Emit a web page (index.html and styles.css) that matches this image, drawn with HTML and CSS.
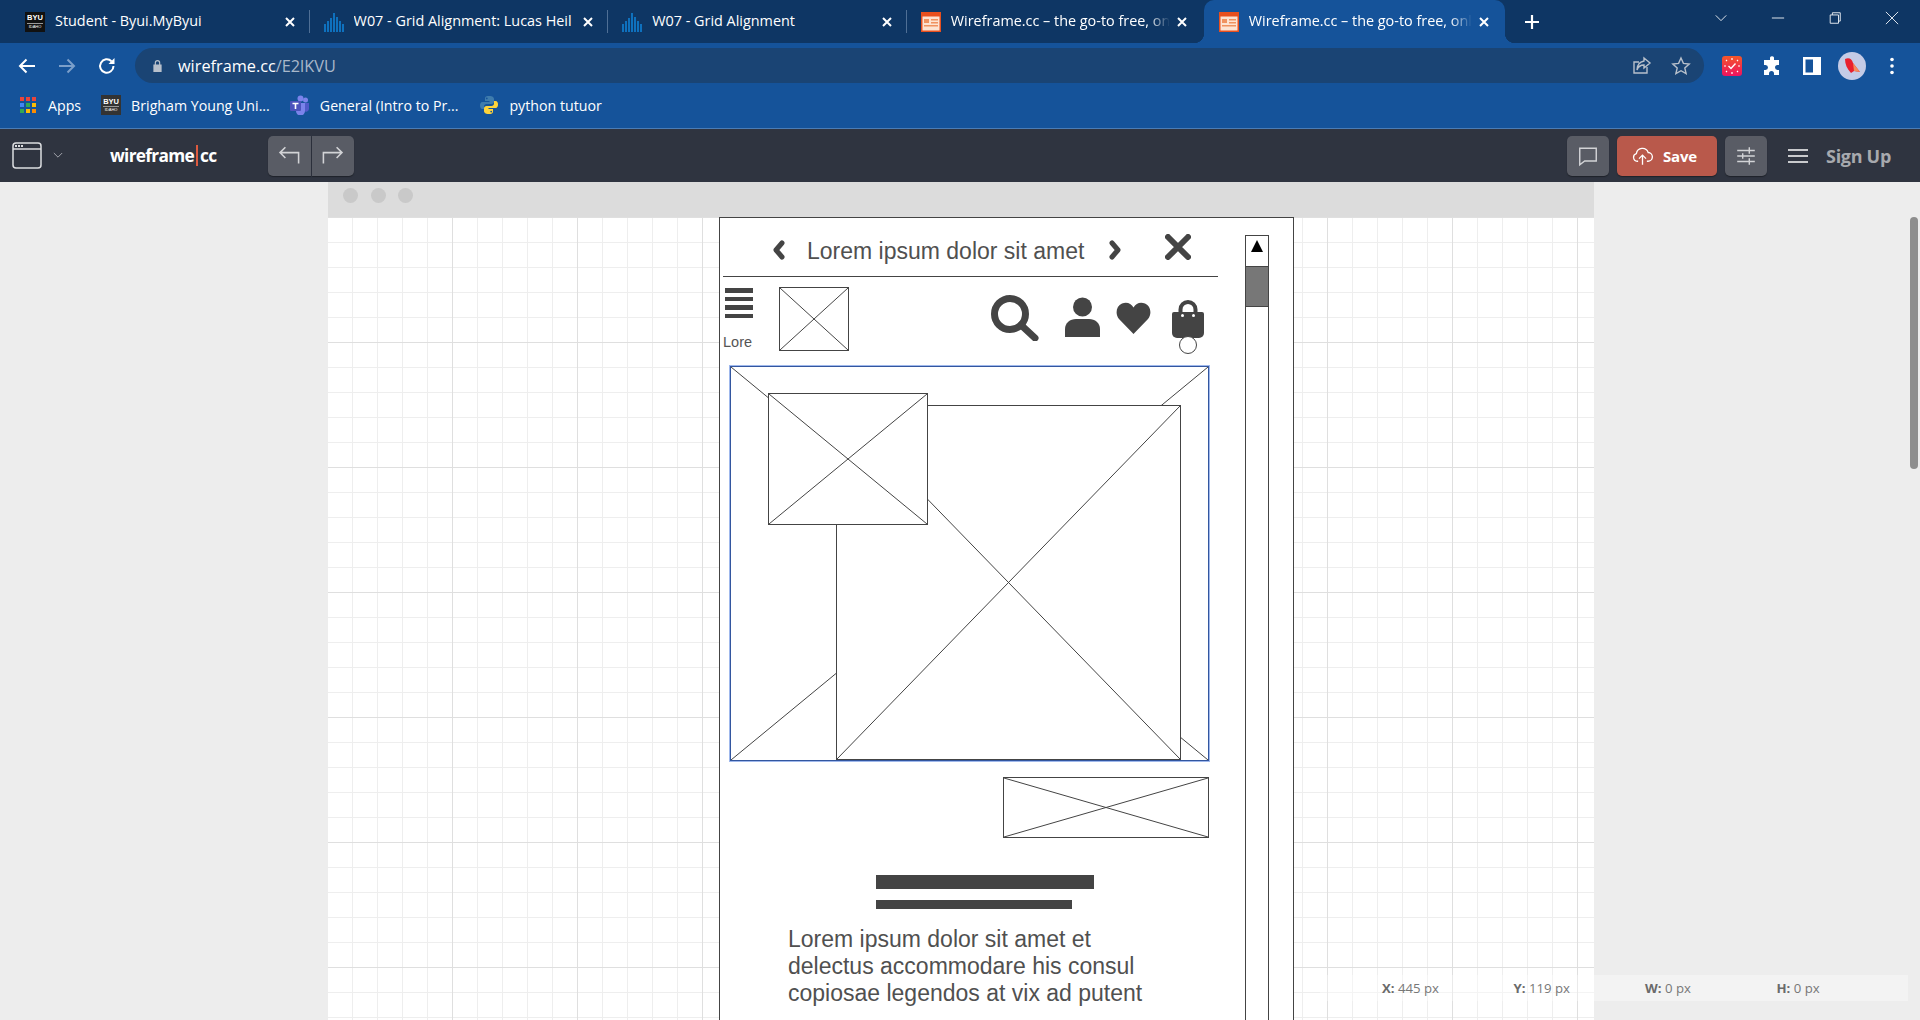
FILE: index.html
```html
<!DOCTYPE html>
<html lang="en">
<head>
  <meta charset="UTF-8">
  <title>Wireframe.cc</title>
  <link rel="stylesheet" href="styles.css">
</head>
<body>

<!-- TABS -->
<div class="tabstrip">
  <div class="tab">
    <span class="fav fav-byu"><b>BYU</b><i>IDAHO</i></span>
    <span class="tab-title">Student - Byui.MyByui</span>
    <svg class="tab-x" viewBox="0 0 12 12"><path d="M2 2l8 8M10 2l-8 8"/></svg>
  </div>
  <div class="tab">
    <svg class="fav" viewBox="0 0 20 20"><path class="bars" d="M1 12v8M4 9v11M7 6v14M10 1v19M13 5v15M16 9v11M19 12v8"/></svg>
    <span class="tab-title">W07 - Grid Alignment: Lucas Heil</span>
    <svg class="tab-x" viewBox="0 0 12 12"><path d="M2 2l8 8M10 2l-8 8"/></svg>
  </div>
  <div class="tab">
    <svg class="fav" viewBox="0 0 20 20"><path class="bars" d="M1 12v8M4 9v11M7 6v14M10 1v19M13 5v15M16 9v11M19 12v8"/></svg>
    <span class="tab-title">W07 - Grid Alignment</span>
    <svg class="tab-x" viewBox="0 0 12 12"><path d="M2 2l8 8M10 2l-8 8"/></svg>
  </div>
  <div class="tab tab-last">
    <svg class="fav" viewBox="0 0 20 20"><rect width="20" height="20" fill="#e8501e"/><rect x="1.5" y="4.5" width="17" height="14" fill="#fde3d2"/><path d="M3 7h5v4H3zM10 7h7v1.500h-7zM10 10h7v1.500h-7zM3 13h14v1.500H3z" fill="#f0925f"/></svg>
    <span class="tab-title tab-fade">Wireframe.cc – the go-to free, online</span>
    <svg class="tab-x" viewBox="0 0 12 12"><path d="M2 2l8 8M10 2l-8 8"/></svg>
  </div>
  <div class="tab tab-active">
    <svg class="fav" viewBox="0 0 20 20"><rect width="20" height="20" fill="#e8501e"/><rect x="1.500" y="4.500" width="17" height="14" fill="#fde3d2"/><path d="M3 7h5v4H3zM10 7h7v1.500h-7zM10 10h7v1.500h-7zM3 13h14v1.500H3z" fill="#f0925f"/></svg>
    <span class="tab-title tab-fade">Wireframe.cc – the go-to free, online</span>
    <svg class="tab-x" viewBox="0 0 12 12"><path d="M2 2l8 8M10 2l-8 8"/></svg>
  </div>
  <svg class="new-tab" viewBox="0 0 16 16"><path d="M8 1v14M1 8h14"/></svg>
  <div class="win-btns">
    <svg viewBox="0 0 16 16"><path d="M2 5l6 6 6-6"/></svg>
    <svg viewBox="0 0 16 16"><path d="M1 8h14"/></svg>
    <svg viewBox="0 0 16 16"><path d="M2.500 4.500h9.500v9.500H2.500zM5 4.500V2h9v9.500h-2"/></svg>
    <svg viewBox="0 0 16 16"><path d="M1 1l14 14M15 1L1 15"/></svg>
  </div>
</div>

<!-- ADDRESS BAR -->
<div class="toolbar">
  <svg class="nav-ico" viewBox="0 0 20 20"><path d="M18 10H3M9.500 3.500L3 10l6.500 6.500"/></svg>
  <svg class="nav-ico nav-off" viewBox="0 0 20 20"><path d="M2 10h15M10.500 3.500L17 10l-6.500 6.500"/></svg>
  <svg class="nav-ico" viewBox="0 0 20 20"><path d="M16.500 10a6.700 6.700 0 1 1-2-4.800"/><path class="solid" d="M17.500 2v6h-6z"/></svg>
  <div class="omnibox">
    <svg class="lock" viewBox="0 0 12 14"><path d="M3 6V4a3 3 0 0 1 6 0v2h1.500v8h-9V6zm1.300 0h3.400V4a1.700 1.700 0 0 0-3.400 0z"/></svg>
    <span class="url">wireframe.cc<span class="url-path">/E2lKVU</span></span>
    <svg class="omni-ico" viewBox="0 0 20 20"><path d="M15 11v6H2V6h5M12 2l6 5-6 5V9c-4 0-6 2-7 5 0-5 2-8 7-9z"/></svg>
    <svg class="omni-ico" viewBox="0 0 20 20"><path d="M10 2l2.400 5.400 5.800.6-4.400 3.900 1.300 5.800-5.100-3-5.100 3 1.300-5.800L1.800 8l5.800-.6z"/></svg>
  </div>
  <div class="ext-row">
    <svg class="ext" viewBox="0 0 20 20"><defs><linearGradient id="extg" x1="0" y1="0" x2="0" y2="1"><stop offset="0" stop-color="#f4572a"/><stop offset="1" stop-color="#ee1260"/></linearGradient></defs><rect width="20" height="20" rx="3" fill="url(#extg)"/><path d="M6.500 10l2.500 2.500 4.500-5" fill="none" stroke="#fff" stroke-width="1.400"/><path d="M10 2v2M10 16v2M2 10h2M16 10h2M4 4l1 1M16 4l-1 1M4 16l1-1M16 16l-1-1" stroke="#fff" stroke-width="1.200"/></svg>
    <svg class="ext" viewBox="0 0 20 20"><path fill="#fff" d="M8 1.500a2.200 2.200 0 0 1 4 0V4h5v5h-1.500a2.300 2.300 0 0 0 0 5H17v5h-5v-1.500a2.300 2.300 0 0 0-5 0V19H2v-5h1.500a2.300 2.300 0 0 0 0-5H2V4h6z"/></svg>
    <svg class="ext" viewBox="0 0 20 20"><path fill="#fff" fill-rule="evenodd" d="M1 1h18v18H1zM3.500 3.500v13H11v-13z"/></svg>
    <span class="avatar"><svg viewBox="0 0 20 20"><path fill="#e8202e" d="M3 3c4-2 7 0 8 4l7 9-6-1-3 2C5 13 3 8 3 3z"/><path fill="#f58a5a" d="M11 7l7 9-6-1z"/></svg></span>
    <svg class="ext" viewBox="0 0 20 20"><circle cx="10" cy="3.500" r="1.800" fill="#fff"/><circle cx="10" cy="10" r="1.800" fill="#fff"/><circle cx="10" cy="16.500" r="1.800" fill="#fff"/></svg>
  </div>
</div>

<!-- BOOKMARKS -->
<div class="bookmarks">
  <div class="bm bm-apps">
    <svg class="bm-ico" viewBox="0 0 18 18"><rect x="1" y="1" width="4" height="4" fill="#e8453c"/><rect x="7" y="1" width="4" height="4" fill="#e8453c"/><rect x="13" y="1" width="4" height="4" fill="#e8453c"/><rect x="1" y="7" width="4" height="4" fill="#4285f4"/><rect x="7" y="7" width="4" height="4" fill="#34a853"/><rect x="13" y="7" width="4" height="4" fill="#fbbc05"/><rect x="1" y="13" width="4" height="4" fill="#34a853"/><rect x="7" y="13" width="4" height="4" fill="#fbbc05"/><rect x="13" y="13" width="4" height="4" fill="#fb8c00"/></svg>
    <span>Apps</span>
  </div>
  <div class="bm bm-byu">
    <span class="fav fav-byu fav-grey"><b>BYU</b><i>IDAHO</i></span>
    <span>Brigham Young Uni...</span>
  </div>
  <div class="bm bm-teams">
    <svg class="fav" viewBox="0 0 20 20"><circle cx="15.500" cy="5" r="2.500" fill="#7b83eb"/><circle cx="10.500" cy="3.500" r="3" fill="#7b83eb"/><path d="M13 8h6v6a3 3 0 0 1-5 2z" fill="#5059c9"/><path d="M6 8h9v8a4.500 4.500 0 0 1-9 0z" fill="#7b83eb"/><rect y="6" width="11" height="10" rx="1" fill="#4b53bc"/><path d="M2.500 8.500h6M5.500 8.500v5.500" stroke="#fff" stroke-width="1.600"/></svg>
    <span>General (Intro to Pr...</span>
  </div>
  <div class="bm bm-py">
    <svg class="fav" viewBox="0 0 20 20"><path fill="#3f7cad" d="M10 1C6 1 6 2.500 6 4v2h4.500v1H3.500C1.500 7 1 9 1 10.500S1.500 14 3.500 14H5v-2.500C5 10 6 9 7.500 9h5C14 9 15 8 15 6.500V4c0-1.500-1-3-5-3zM7.800 2.500a.9.900 0 1 1 0 1.800.9.900 0 0 1 0-1.800z"/><path fill="#ffd43b" d="M10 19c4 0 4-1.500 4-3v-2H9.500v-1h7c2 0 2.500-2 2.500-3.500S18.500 6 16.500 6H15v2.500c0 1.500-1 2.500-2.500 2.500h-5C6 11 5 12 5 13.500V16c0 1.500 1 3 5 3zm2.200-1.500a.9.900 0 1 1 0-1.800.9.900 0 0 1 0 1.800z"/></svg>
    <span>python tutuor</span>
  </div>
</div>

<!-- WIREFRAME.CC BAR -->
<div class="appbar">
  <svg class="app-window" viewBox="0 0 30 27"><rect x="1" y="1" width="28" height="25" rx="3"/><path d="M1 7h28"/><path class="solid" d="M3 3h2v2H3zM6 3h2v2H6zM9 3h2v2H9z"/></svg>
  <svg class="app-caret" viewBox="0 0 12 8"><path d="M1 1l5 5 5-5"/></svg>
  <span class="logo">wireframe<span class="logo-bar"></span>cc</span>
  <div class="undo-group">
    <button class="tool"><svg viewBox="0 0 20 20"><path d="M18 17V8H3M7 3.500L2.500 8 7 12.500"/></svg></button>
    <button class="tool"><svg viewBox="0 0 20 20"><path d="M2 17V8h15M13 3.500L17.500 8 13 12.500"/></svg></button>
  </div>
  <div class="app-right">
    <button class="tool tool-solo"><svg viewBox="0 0 20 20"><path d="M2.500 3h15v11.500H7L2.500 18z"/></svg></button>
    <button class="save"><svg viewBox="0 0 24 22"><path d="M7 17H6a4.500 4.500 0 0 1-1-8.800A7 7 0 0 1 18.500 7 5 5 0 0 1 18 17h-1M12 21V10M8 14l4-4 4 4"/></svg>Save</button>
    <button class="tool tool-solo"><svg viewBox="0 0 20 20"><path d="M2 5h16M2 10h16M2 15h16M13 2v6M7 7.500v5M13 12v6"/></svg></button>
    <svg class="app-menu" viewBox="0 0 20 16"><path d="M0 2h20M0 8h20M0 14h20"/></svg>
    <span class="signup">Sign Up</span>
  </div>
</div>

<!-- WORK AREA -->
<div class="workspace">
  <div class="artboard">
    <div class="art-top">
      <span class="dot"></span><span class="dot"></span><span class="dot"></span>
    </div>
    <div class="art-grid"></div>
  </div>

  <div class="frame">
    <svg class="wf wf-prev" viewBox="0 0 14 20"><path d="M10 3l-6 7 6 7"/></svg>
    <span class="wf wf-title">Lorem ipsum dolor sit amet</span>
    <svg class="wf wf-next" viewBox="0 0 14 20"><path d="M4 3l6 7-6 7"/></svg>
    <svg class="wf wf-close" viewBox="0 0 26 26"><path d="M3 3l20 20M23 3L3 23"/></svg>
    <div class="wf wf-rule"></div>

    <div class="wf wf-burger"><span></span><span></span><span></span><span></span></div>
    <span class="wf wf-lore">Lore</span>
    <div class="wf xbox xbox-logo"><svg viewBox="0 0 100 100" preserveAspectRatio="none"><path d="M0 0L100 100M100 0L0 100"/></svg></div>

    <svg class="wf wf-search" viewBox="0 0 48 46"><circle cx="19" cy="19" r="15.500"/><path d="M30 30l14 13"/></svg>
    <svg class="wf wf-user" viewBox="0 0 35 40"><circle cx="17.500" cy="10" r="9.500"/><path d="M0 40V32c0-6 5-10 11-10h13c6 0 11 4 11 10v8z"/></svg>
    <svg class="wf wf-heart" viewBox="0 0 35 32"><path d="M17.500 32L3 17C-1 12.500 0 4 6 1.500c5-2 9 0 11.500 4 2.500-4 6.500-6 11.500-4 6 2.500 7 11 3 15.500z"/></svg>
    <svg class="wf wf-bag" viewBox="0 0 32 38"><path d="M2 12h28a2 2 0 0 1 2 2v19a5 5 0 0 1-5 5H5a5 5 0 0 1-5-5V14a2 2 0 0 1 2-2z"/><path class="bag-handle" d="M8.500 12V9.500a7.500 7.500 0 0 1 15 0V12"/><circle class="bag-hole" cx="10.500" cy="15.500" r="1.500"/><circle class="bag-hole" cx="21.500" cy="15.500" r="1.500"/></svg>
    <span class="wf wf-badge"></span>

    <div class="wf xbox xbox-main"><svg viewBox="0 0 100 100" preserveAspectRatio="none"><path d="M0 0L100 100M100 0L0 100"/></svg></div>
    <div class="wf xbox xbox-mid"><svg viewBox="0 0 100 100" preserveAspectRatio="none"><path d="M0 0L100 100M100 0L0 100"/></svg></div>
    <div class="wf xbox xbox-small"><svg viewBox="0 0 100 100" preserveAspectRatio="none"><path d="M0 0L100 100M100 0L0 100"/></svg></div>
    <div class="wf xbox xbox-wide"><svg viewBox="0 0 100 100" preserveAspectRatio="none"><path d="M0 0L100 100M100 0L0 100"/></svg></div>

    <div class="wf wf-bar1"></div>
    <div class="wf wf-bar2"></div>
    <p class="wf wf-text">Lorem ipsum dolor sit amet et<br>delectus accommodare his consul<br>copiosae legendos at vix ad putent</p>

    <div class="wf wf-scroll">
      <div class="scroll-up"></div>
      <div class="scroll-thumb"></div>
    </div>
  </div>

  <div class="coords">
    <span class="coord"><b>X:</b> 445 px</span>
    <span class="coord"><b>Y:</b> 119 px</span>
    <span class="coord"><b>W:</b> 0 px</span>
    <span class="coord"><b>H:</b> 0 px</span>
  </div>

  <div class="page-scroll"></div>
</div>

</body>
</html>
```

FILE: styles.css
```css
* { box-sizing: border-box; }
html, body { margin: 0; height: 100%; overflow: hidden; }
body {
  width: 1920px;
  height: 1020px;
  display: flex;
  flex-direction: column;
  font-family: "Open Sans", sans-serif;
  background: #ededed;
  color: #fff;
}
svg { display: block; flex: none; }
button { border: none; padding: 0; margin: 0; font: inherit; color: inherit; }

/* tabs */
.tabstrip {
  height: 43px;
  background: #0e3664;
  display: flex;
  align-items: stretch;
  padding-left: 11px;
  flex: none;
}
.tab {
  width: 298.600px;
  display: flex;
  align-items: center;
  gap: 10px;
  padding: 0 14px;
  position: relative;
  font-size: 14.400px;
}
.tab::after {
  content: "";
  position: absolute;
  right: 0;
  top: 10px;
  bottom: 10px;
  width: 1px;
  background: #4f6f95;
}
.tab-last { width: 295px; }
.tab-last::after { display: none; }
.tab-active {
  width: 301px;
  background: #15539a;
  border-radius: 10px 10px 0 0;
  margin-left: 2px;
  padding: 0 15px;
}
.tab-active::before {
  content: "";
  position: absolute;
  left: -10px;
  bottom: 0;
  width: 10px;
  height: 10px;
  background: radial-gradient(circle at 0 0, transparent 10px, #15539a 10.500px);
}
.tab-active::after {
  left: auto;
  right: -10px;
  top: auto;
  bottom: 0;
  width: 10px;
  height: 10px;
  background: radial-gradient(circle at 100% 0, transparent 10px, #15539a 10.500px);
}
.tab-title {
  flex: 1;
  min-width: 0;
  margin-bottom: 3px;
  white-space: nowrap;
  overflow: hidden;
}
.tab-fade {
  -webkit-mask-image: linear-gradient(to right, #000 calc(100% - 22px), transparent);
  mask-image: linear-gradient(to right, #000 calc(100% - 22px), transparent);
}
.tab-x { width: 12px; height: 12px; margin-left: -4px; }
.tab-x path { fill: none; stroke: #fff; stroke-width: 2; }
.fav { width: 20px; height: 20px; }
.fav-byu {
  background: #111;
  display: flex;
  flex-direction: column;
  align-items: center;
  justify-content: center;
  flex: none;
  font-family: "Liberation Sans", sans-serif;
  line-height: 1;
}
.fav-byu b { font-size: 7.500px; border-bottom: 1px solid #999; padding-bottom: 1px; }
.fav-byu i { font-size: 4px; font-style: normal; margin-top: 1px; }
.fav-grey { background: #333; }
.bars { fill: none; stroke: #0f78c8; stroke-width: 1.800; }
.new-tab { width: 16px; height: 16px; align-self: center; margin-left: 19px; }
.new-tab path { fill: none; stroke: #fff; stroke-width: 2.200; }
.win-btns {
  margin-left: auto;
  display: flex;
  gap: 43px;
  padding: 11px 21px 0 0;
  align-self: flex-start;
}
.win-btns svg { width: 14px; height: 14px; }
.win-btns path { fill: none; stroke: #e4e9ef; stroke-width: 1.100; }

/* address bar */
.toolbar {
  height: 45px;
  background: #15539a;
  display: flex;
  align-items: flex-start;
  padding: 5px 0 0 17px;
  flex: none;
}
.nav-ico {
  width: 20px;
  height: 20px;
  margin: 8px 20px 0 0;
}
.nav-ico path { fill: none; stroke: #fff; stroke-width: 2; }
.nav-ico path.solid { fill: #fff; stroke: none; }
.nav-off path { stroke: #7b9fca; }
.omnibox {
  width: 1569px;
  height: 35px;
  margin-left: -2px;
  background: #1a4474;
  border-radius: 18px;
  display: flex;
  align-items: center;
  padding: 0 13px 0 17px;
  gap: 9px;
}
.lock { width: 11px; height: 13px; margin-right: 6px; }
.lock path { fill: #b8c0cb; }
.url { font-size: 16.300px; margin-right: auto; }
.url-path { color: #a9b8ca; }
.omni-ico { width: 20px; height: 20px; margin-left: 10px; }
.omni-ico path { fill: none; stroke: #b8c0cb; stroke-width: 1.400; }
.ext-row {
  display: flex;
  align-items: center;
  gap: 20px;
  height: 35px;
  padding-left: 18px;
}
.ext { width: 20px; height: 20px; }
.avatar {
  width: 28px;
  height: 28px;
  margin: 0 -4px;
  border-radius: 50%;
  background: #c4cbe6;
  padding: 4px;
}

/* bookmarks */
.bookmarks {
  height: 41px;
  background: #15539a;
  border-bottom: 1px solid #4a7cb5;
  display: flex;
  align-items: center;
  padding-bottom: 6px;
  font-size: 14.200px;
  flex: none;
}
.bm { display: flex; align-items: center; gap: 10px; }
.bm-ico { width: 18px; height: 18px; }
.bm-apps { margin-left: 19px; gap: 11px; }
.bm-byu { margin-left: 20px; }
.bm-teams { margin-left: 20px; }
.bm-py { margin-left: 21px; }

/* wireframe bar */
.appbar {
  height: 53px;
  background: #2f3440;
  display: flex;
  align-items: center;
  padding-left: 12px;
  flex: none;
}
.app-window { width: 30px; height: 27px; }
.app-window rect, .app-window > path { fill: none; stroke: #dcdde0; stroke-width: 1.500; }
.app-window path.solid { fill: #dcdde0; stroke: none; }
.app-caret { width: 10px; height: 7px; margin-left: 11px; }
.app-caret path { fill: none; stroke: #b9bbc0; stroke-width: 1; }
.logo {
  margin-left: 47px;
  width: 158px;
  font-weight: 700;
  font-size: 17.300px;
  letter-spacing: -0.700px;
  display: flex;
  align-items: center;
}
.logo-bar { width: 2px; height: 21px; background: #dd5a3f; margin: 0 2px; }
.undo-group { display: flex; gap: 1px; }
.tool {
  width: 42.500px;
  height: 40px;
  background: #595c65;
  display: flex;
  align-items: center;
  justify-content: center;
  box-shadow: 0 1px 1px #1f222a;
}
.tool:first-child { border-radius: 5px 0 0 5px; }
.tool:last-child { border-radius: 0 5px 5px 0; }
.tool svg { width: 24px; height: 24px; margin-bottom: 2px; }
.tool path { fill: none; stroke: #d2d3d6; stroke-width: 1.300; }
.tool-solo, .tool-solo:first-child, .tool-solo:last-child { width: 42px; border-radius: 5px; }
.tool-solo svg { width: 22px; height: 22px; margin-bottom: 0; }
.app-right {
  margin-left: auto;
  display: flex;
  align-items: center;
  padding-right: 29px;
  gap: 8px;
}
.save {
  width: 100px;
  height: 40px;
  background: #b9594b;
  border-radius: 5px;
  display: flex;
  align-items: center;
  gap: 10px;
  padding-left: 15px;
  font-weight: 700;
  font-size: 15px;
  letter-spacing: -0.200px;
  box-shadow: 0 1px 1px #1f222a;
}
.save svg { width: 21px; height: 20px; }
.save path { fill: none; stroke: #fff; stroke-width: 1.500; }
.app-menu { width: 20px; height: 16px; margin-left: 13px; }
.app-menu path { fill: none; stroke: #c9cacd; stroke-width: 1.800; }
.signup {
  margin-left: 10px;
  font-weight: 700;
  font-size: 18px;
  letter-spacing: -0.300px;
  color: #a7a9ae;
}

/* work area */
.workspace {
  flex: 1;
  position: relative;
  overflow: hidden;
  background: #ededed;
}
.artboard {
  margin-left: 328px;
  width: 1266px;
  height: 100%;
  display: flex;
  flex-direction: column;
}
.art-top {
  height: 35px;
  background: #dcdcdc;
  display: flex;
  align-items: flex-start;
  gap: 12.500px;
  padding: 6px 0 0 15px;
  flex: none;
}
.dot { width: 15px; height: 15px; border-radius: 50%; background: #c9c9c9; }
.art-grid {
  flex: 1;
  background-color: #fff;
  background-image:
    linear-gradient(to right, #dfdfdf 1px, transparent 1px),
    linear-gradient(to bottom, #dfdfdf 1px, transparent 1px),
    linear-gradient(to right, #eeeeee 1px, transparent 1px),
    linear-gradient(to bottom, #eeeeee 1px, transparent 1px);
  background-size: 125px 125px, 125px 125px, 25px 25px, 25px 25px;
  background-position: -1px 0, 0 0, -1px 0, 0 0;
}

/* the drawing, every item sits at its own spot on the canvas */
.frame {
  position: absolute;
  left: 719px;
  top: 35px;
  width: 575px;
  height: 900px;
  background: #fff;
  border: 1px solid #444;
  color: #505050;
  font-family: "Liberation Sans", sans-serif;
}
.wf { position: absolute; margin: 0; }
.wf-prev, .wf-next { width: 14px; height: 20px; top: 22px; }
.wf-prev { left: 52px; }
.wf-next { left: 388px; }
.wf-prev path, .wf-next path { fill: none; stroke: #444; stroke-width: 5; stroke-linecap: round; stroke-linejoin: round; }
.wf-title { left: 87px; top: 18px; font-size: 23px; line-height: 30px; white-space: nowrap; }
.wf-close { left: 445px; top: 16px; width: 26px; height: 26px; }
.wf-close path { fill: none; stroke: #444; stroke-width: 6; stroke-linecap: round; }
.wf-rule { left: 3px; top: 58px; width: 495px; height: 1px; background: #444; }

.wf-burger { left: 5px; top: 70px; width: 28px; display: flex; flex-direction: column; gap: 4px; }
.wf-burger span { height: 4.500px; background: #444; }
.wf-lore { left: 3px; top: 114px; font-size: 14.500px; line-height: 20px; color: #555; }

.xbox { background: #fff; border: 1px solid #444; }
.xbox svg { width: 100%; height: 100%; }
.xbox path { fill: none; stroke: #444; stroke-width: 1; vector-effect: non-scaling-stroke; }
.xbox-logo { left: 59px; top: 69px; width: 70px; height: 64px; }
.xbox-main { left: 10px; top: 148px; width: 479px; height: 395px; border-color: #33569f; box-shadow: 0 0 0 1px rgba(80,125,220,0.55); }
.xbox-mid { left: 116px; top: 187px; width: 345px; height: 355px; }
.xbox-small { left: 48px; top: 175px; width: 160px; height: 132px; }
.xbox-wide { left: 283px; top: 559px; width: 206px; height: 61px; }

.wf-search { left: 271px; top: 77px; width: 48px; height: 46px; }
.wf-search circle, .wf-search path { fill: none; stroke: #444; stroke-width: 7; }
.wf-search path { stroke-linecap: round; }
.wf-user { left: 345px; top: 79px; width: 35px; height: 40px; fill: #444; }
.wf-heart { left: 396px; top: 84px; width: 35px; height: 32px; fill: #444; }
.wf-bag { left: 452px; top: 82px; width: 32px; height: 38px; fill: #444; }
.bag-handle { fill: none; stroke: #444; stroke-width: 4; }
.bag-hole { fill: #fff; }
.wf-badge { left: 459px; top: 118px; width: 18px; height: 18px; background: #fff; border: 1px solid #444; border-radius: 50%; }

.wf-bar1 { left: 156px; top: 657px; width: 218px; height: 14px; background: #444; }
.wf-bar2 { left: 156px; top: 682px; width: 196px; height: 9px; background: #444; }
.wf-text { left: 68px; top: 708px; font-size: 23px; line-height: 27px; white-space: nowrap; }

.wf-scroll { left: 525px; top: 17px; width: 24px; height: 900px; border: 1px solid #444; background: #fff; }
.scroll-up { height: 30px; position: relative; }
.scroll-up::after {
  content: "";
  position: absolute;
  left: 5px;
  top: 4px;
  border-left: 6px solid transparent;
  border-right: 6px solid transparent;
  border-bottom: 12px solid #000;
}
.scroll-thumb { height: 41px; background: #777; border-top: 1px solid #444; border-bottom: 1px solid #444; }

/* position read-out */
.coords {
  position: absolute;
  left: 1320px;
  top: 793px;
  width: 588px;
  height: 26px;
  background: rgba(255,255,255,0.35);
  display: flex;
  align-items: center;
  padding-left: 62px;
  font-size: 13.200px;
  color: #777;
}
.coord { width: 134px; }
.coord b { color: #6a6a6a; }
.page-scroll {
  position: absolute;
  left: 1910px;
  top: 35px;
  width: 8px;
  height: 252px;
  border-radius: 4px;
  background: #8e8e8e;
}
```
